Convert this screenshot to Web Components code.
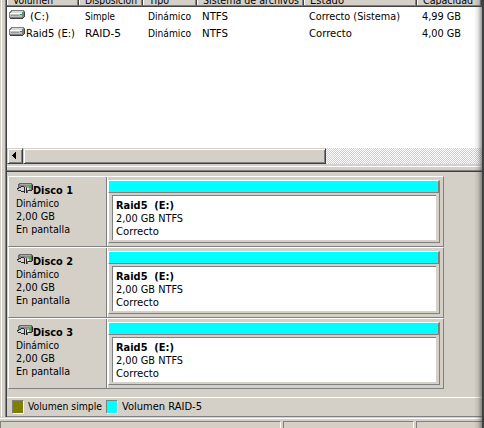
<!DOCTYPE html>
<html lang="es"><head><meta charset="utf-8"><title>Administración de discos</title>
<style>html,body{margin:0;width:484px;height:428px;overflow:hidden;background:#d4d0c8}</style></head><body>
<disk-manager></disk-manager>
<script>
const define=(name,html,after)=>customElements.define(name,class extends HTMLElement{
 connectedCallback(){if(this.shadowRoot)return;const r=this.attachShadow({mode:'open'});r.innerHTML=html;if(after)after(this,r)}
});
/* One text line, scaled to the width given in the w attribute. */
define('fit-text',`<style>:host{display:block;height:13px;line-height:13px;white-space:pre;font-family:"DejaVu Sans Condensed","DejaVu Sans",sans-serif;font-stretch:condensed;font-size:11px;color:#000}:host([b]){font-weight:bold}span{display:inline-block;transform-origin:0 50%}</style><span><slot></slot></span>`,(h,r)=>{
 const s=r.querySelector('span'),w=+h.getAttribute('w');if(w)s.style.transform=`scaleX(${w/s.getBoundingClientRect().width})`;
});
define('volume-icon',`<style>:host{display:block;width:16px;height:9px}svg{display:block}</style>
<svg width="16" height="9" shape-rendering="crispEdges"><path d="M2 0h13v1h1v6h-1v1h-1v1H1V8H0V2h1V1h1z" fill="#808080"/><path d="M3 1h11v1H3zM2 2h11v1H2z" fill="#d8d8d8"/><path d="M1 3h12v1H1z" fill="#fff"/><path d="M1 4h12v3H1z" fill="#c0c0c0"/><path d="M2 5h8v1H2z" fill="#989898"/><path d="M11 4h2v1h-2z" fill="#00b040"/><path d="M1 8h13v1H1zM15 2h1v5h-1zM14 7h1v1h-1z" fill="#404040"/></svg>`);
define('disk-icon',`<style>:host{display:block;width:17px;height:12px}svg{display:block}</style>
<svg width="17" height="12" shape-rendering="crispEdges"><path d="M2 0h13v1h1v6h-1v1h-4v2H8V9H4V8H2V7H0V5h1V1h1z" fill="#686868"/><path d="M3 1h11v1H2V2h1z" fill="#a8a8a8"/><path d="M2 2h12v2H2z" fill="#888"/><path d="M10 3h4v4h-4z" fill="#a0a0a0"/><path d="M4 4h4v5H4V8H2V7H1V6h1V5h2z" fill="#d4d4d4"/><path d="M4 3h3v1H4zM2 4h2v1H2zM0 5h2v1H0zM1 7h3v1H1zM4 8h3v1H4zM7 4h1v6H7zM9 5h1v5H9zM11 7h4v1h-4zM15 2h1v5h-1z" fill="#282828"/><path d="M8 4h1v6H8z" fill="#f0e020"/><path d="M10 5h2v2h-2z" fill="#e8e8e8"/><path d="M12 3h2v2h-2z" fill="#10d020"/></svg>`);
define('list-header',`<style>:host{display:grid;grid-template-columns:72px 64px 54px 107px 113px 65px;height:6px;overflow:hidden;background:#d4d0c8;border-bottom:1px solid #404040}
div{box-sizing:border-box;height:6px;border-right:1px solid #404040;border-bottom:1px solid #808080;box-shadow:inset 1px 0 #fff,inset -1px 0 #808080;padding-left:6px;overflow:hidden}fit-text{margin-top:-6px}</style>
<div><fit-text w="40">Volumen</fit-text></div><div><fit-text w="52">Disposición</fit-text></div><div><fit-text w="20">Tipo</fit-text></div><div><fit-text w="96">Sistema de archivos</fit-text></div><div><fit-text w="34">Estado</fit-text></div><div><fit-text w="50">Capacidad</fit-text></div>`);
define('volume-row',`<style>:host{display:grid;grid-template-columns:18px 59px 63px 54px 107px 113px 50px;height:17px;padding-left:1px;align-items:start}volume-icon{margin:3px 0 0 1px}::slotted(*){margin-top:3px}</style><volume-icon></volume-icon><slot></slot>`);
define('scroll-bar',`<style>:host{display:flex;height:16px;background:repeating-conic-gradient(#fff 0 25%,#d4d0c8 0 50%) 0 0/2px 2px}
.b{box-sizing:border-box;height:16px;background:#d4d0c8;border:1px solid #d4d0c8;border-right-color:#404040;border-bottom-color:#404040;box-shadow:inset 1px 1px #fff,inset -1px -1px #808080}.a{width:16px;padding:3px 0 0 4px}.t{width:303px}svg{display:block}</style><div class="b a"><svg width="4" height="7" shape-rendering="crispEdges"><path d="M4 0v7H3V6H2V5H1V4H0V3h1V2h1V1h1V0z"/></svg></div><div class="b t"></div>`);
define('disk-row',`<style>:host{display:grid;grid-template-columns:98px 336px;height:71px;box-sizing:border-box;border-top:1px solid #fff;border-bottom:1px solid #808080;border-right:1px solid #808080;border-left:1px solid #fff;width:436px}
.l{box-sizing:border-box;padding:6px 0 0 6px;border-right:1px solid #808080}.n{display:flex;height:13px;padding-left:2px}.n fit-text{margin-left:-1px;margin-top:1px}.l>fit-text{padding-left:.5px;position:relative;top:1px}
.r{box-sizing:border-box;border-left:1px solid #fff;padding:3px 0 0}.bar{box-sizing:border-box;width:332px;height:13px;background:#0ff;border:1px solid #808080;border-top-color:#fff;border-left-color:#fff;border-right-width:2px}
.v{box-sizing:border-box;width:332px;height:50px;border:1px solid #808080;border-top:0;border-left-color:#fff;padding:2px 3px 3px}.w{box-sizing:border-box;height:45px;background:#fff;border-top:1px solid #808080;border-left:1px solid #808080;padding:3px 0 0 2.5px}</style>
<div class="l"><div class="n"><disk-icon></disk-icon><fit-text b w="40"><slot></slot></fit-text></div><fit-text w="43">Dinámico</fit-text><fit-text w="39">2,00 GB</fit-text><fit-text w="54">En pantalla</fit-text></div><div class="r"><div class="bar"></div><div class="v"><div class="w"><fit-text b w="58">Raid5  (E:)</fit-text><fit-text w="67">2,00 GB NTFS</fit-text><fit-text w="43">Correcto</fit-text></div></div></div>`);
define('legend-bar',`<style>:host{display:flex;box-sizing:border-box;height:20px;border-top:1px solid #fff;border-bottom:1px solid #808080;padding-left:5px;align-items:flex-start}i{display:block;box-sizing:border-box;width:12px;height:14px;margin-top:2px;border:1px solid #fff;border-top-color:#808080;border-left-color:#808080}.g{background:#808000}.c{background:#0ff;margin-left:3px}fit-text{margin:2px 0 0 4px}.first{width:75px}</style><i class="g"></i><fit-text class="first" w="74">Volumen simple</fit-text><i class="c"></i><fit-text w="80">Volumen RAID-5</fit-text>`);
define('status-bar',`<style>:host{display:grid;grid-template-columns:281px 131px 68px;column-gap:2px;height:10px;border-top:1px solid #fff;padding-top:2px;box-sizing:border-box}div{border-top:1px solid #808080;border-left:1px solid #808080;border-right:1px solid #fff}div:first-child{border-left:0}</style><div></div><div></div><div></div>`);
define('disk-manager',`<style>:host{display:grid;grid-template-rows:418px 10px;position:relative;width:484px;height:428px;overflow:hidden;background:#d4d0c8}
main{display:grid;grid-template-columns:7px 477px}.e{background:linear-gradient(90deg,#d4d0c8 1px,#fff 1px 2px,#d4d0c8 2px 5px,#808080 5px 6px,#404040 6px);height:417px}.list{height:148px;background:#fff}.split{height:8px;background:linear-gradient(#d4d0c8 2px,#fff 2px 3px,#d4d0c8 3px 6px,#808080 6px 7px,#404040 7px)}.disks{box-sizing:border-box;padding:4px 0 0 1px;height:225px}
/* Soft shadow along the window edge. */
.shade{position:absolute;right:0;top:0;width:10px;height:428px;background:linear-gradient(90deg,#40404000,#40404022 4px,#40404088 8px,#404040 8px)}</style>
<main><div class="e"></div><section><div class="list"><list-header></list-header><volume-row><fit-text w="19" style="padding-left:4px">(C:)</fit-text><fit-text w="30">Simple</fit-text><fit-text w="43">Dinámico</fit-text><fit-text w="26">NTFS</fit-text><fit-text w="91">Correcto (Sistema)</fit-text><fit-text w="39">4,99 GB</fit-text></volume-row><volume-row><fit-text w="49">Raid5 (E:)</fit-text><fit-text w="36">RAID-5</fit-text><fit-text w="43">Dinámico</fit-text><fit-text w="26">NTFS</fit-text><fit-text w="43">Correcto</fit-text><fit-text w="39">4,00 GB</fit-text></volume-row></div><scroll-bar></scroll-bar><div class="split"></div><div class="disks"><disk-row>Disco 1</disk-row><disk-row>Disco 2</disk-row><disk-row>Disco 3</disk-row></div><legend-bar></legend-bar></section></main><status-bar></status-bar><div class="shade"></div>`);
</script></body></html>
